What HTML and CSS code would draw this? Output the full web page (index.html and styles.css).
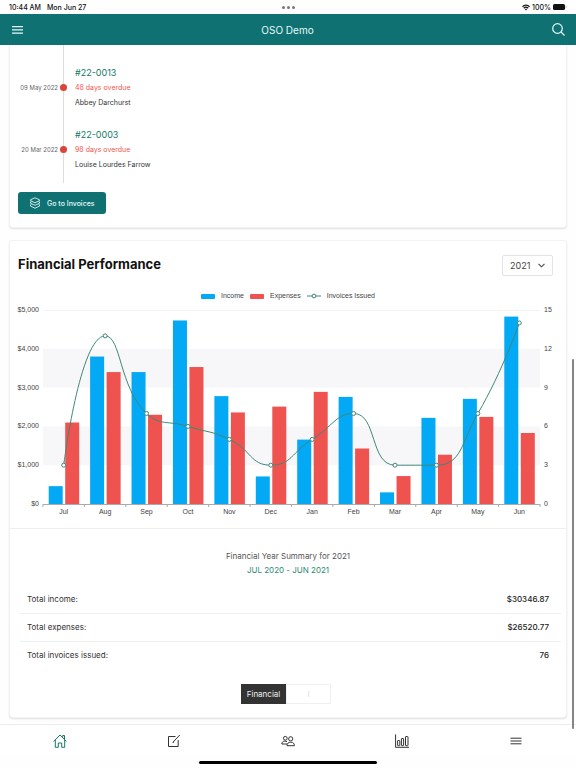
FILE: index.html
```html
<!DOCTYPE html>
<html lang="en">
<head>
    <meta charset="UTF-8">
    <meta name="viewport" content="width=device-width, initial-scale=1.0">
    <title>OSO Demo</title>
    <link rel="stylesheet" href="styles.css">
</head>
<body>
    <div class="status-bar">
        <div class="status-left"><span>10:44 AM</span><span>Mon Jun 27</span></div>
        <div class="status-dots"><i></i><i></i><i></i></div>
        <div class="status-right">
            <svg width="8" height="7" viewBox="0 0 16 13" fill="none" stroke="#111" stroke-width="2.4"><path d="M1 5c4-4.500 10-4.500 14 0M3.600 8c2.600-2.800 6.200-2.800 8.800 0"/><path d="M8 12.500L5.800 10c1.300-1.200 3.100-1.200 4.400 0z" fill="#111" stroke="none"/></svg>
            <span>100%</span>
            <svg width="14" height="6" viewBox="0 0 14 6"><rect width="12" height="6" rx="1.500" fill="#111"/><path d="M12.800 2v2c1-.3 1-1.700 0-2z" fill="#777"/></svg>
        </div>
    </div>

    <header class="header">
        <button class="icon-btn" aria-label="Menu">
            <svg width="11" height="8" viewBox="0 0 11 8" stroke="#e4fbfa" stroke-width="1.200"><path d="M0 .7h11M0 3.900h11M0 7.100h11"/></svg>
        </button>
        <h1>OSO Demo</h1>
        <button class="icon-btn" aria-label="Search">
            <svg width="13" height="13" viewBox="0 0 13 13" fill="none" stroke="#e4fbfa" stroke-width="1.200"><circle cx="5.500" cy="5.500" r="4.800"/><path d="M9 9l3.500 3.500"/></svg>
        </button>
    </header>

    <main class="content">
        <section class="card card-invoices">
            <ul class="timeline">
                <li class="timeline-item">
                    <span class="date">09 May 2022</span>
                    <div class="details">
                        <a href="#">#22-0013</a>
                        <span class="overdue">48 days overdue</span>
                        <span>Abbey Darchurst</span>
                    </div>
                </li>
                <li class="timeline-item">
                    <span class="date">20 Mar 2022</span>
                    <div class="details">
                        <a href="#">#22-0003</a>
                        <span class="overdue">98 days overdue</span>
                        <span>Louise Lourdes Farrow</span>
                    </div>
                </li>
            </ul>
            <button class="btn">
                <svg width="12" height="12" viewBox="0 0 24 24" fill="none" stroke="#d9f5f3" stroke-width="1.800" stroke-linejoin="round"><path d="M12 1.500l9 4v2l-9 4-9-4v-2zM5 8.500l-2 1.500v2.500l9 4 9-4V10l-2-1.500M5 14l-2 1.500V18l9 4.500 9-4.500v-2.500L19 14"/></svg>
                Go to Invoices
            </button>
        </section>

        <section class="card">
            <div class="card-head">
                <h2>Financial Performance</h2>
                <div class="select-wrap">
                    <select aria-label="Financial year">
                        <option>2021</option>
                        <option>2020</option>
                    </select>
                    <svg class="chevron" width="7" height="5" viewBox="0 0 7 5" fill="none" stroke="#444" stroke-width="1.100"><path d="M.5.8l3 3 3-3"/></svg>
                </div>
            </div>

            <div class="legend">
                <span class="legend-item"><i class="swatch income"></i>Income</span>
                <span class="legend-item"><i class="swatch expenses"></i>Expenses</span>
                <span class="legend-item">
                    <svg width="14" height="6" viewBox="0 0 14 6" stroke="#3f8878" fill="#fff"><path d="M0 3h14"/><circle cx="7" cy="3" r="1.900"/></svg>Invoices Issued
                </span>
            </div>
            <svg id="chart" class="chart" viewBox="0 0 556 220" role="img" aria-label="Income, expenses and invoices issued by month"></svg>

            <div class="summary">
                <p class="summary-title">Financial Year Summary for 2021</p>
                <p class="summary-range">JUL 2020 - JUN 2021</p>
                <table>
                    <tr><th scope="row">Total income:</th><td>$30346.87</td></tr>
                    <tr><th scope="row">Total expenses:</th><td>$26520.77</td></tr>
                    <tr><th scope="row">Total invoices issued:</th><td>76</td></tr>
                </table>
                <div class="toggle">
                    <button class="active">Financial</button>
                    <button>I</button>
                </div>
            </div>
        </section>
    </main>

    <nav class="tabs">
        <a href="#" class="active" aria-label="Home">
            <svg width="14" height="14" viewBox="0 0 14 14"><path d="M.6 7.500L7 1l6.400 6.500M2.300 6v7.300h3V9h3.400v4.300h3V6M9.700 3.300V1.500h1.800v3.700"/></svg>
        </a>
        <a href="#" aria-label="Edit">
            <svg width="14" height="14" viewBox="0 0 14 14"><path d="M8.500 2.500H1.500v10h9.700V6M6 8.200L12.800 1M5.700 8.500l1.300-.4"/></svg>
        </a>
        <a href="#" aria-label="Clients">
            <svg width="14" height="14" viewBox="0 0 14 14"><circle cx="4.300" cy="4.300" r="1.900"/><circle cx="9.700" cy="4.800" r="2.100"/><path d="M6 10H.8c0-1.800 1.200-2.900 3-2.900.9 0 1.700.3 2.200.8M6 11.700c0-2.200 1.300-3.500 3.700-3.500s3.700 1.300 3.700 3.500z"/></svg>
        </a>
        <a href="#" aria-label="Reports">
            <svg width="14" height="14" viewBox="0 0 14 14"><path d="M.6.4v12.900H14"/><rect x="2.600" y="6.500" width="2.200" height="5.200" rx=".5"/><rect x="6.400" y="4.500" width="2.200" height="7.200" rx=".5"/><rect x="10.500" y="2.500" width="2.500" height="9.200" rx=".5"/></svg>
        </a>
        <a href="#" aria-label="More">
            <svg width="12" height="14" viewBox="0 0 12 14"><path d="M.5 4.200h11M.5 7h11M.5 9.800h11"/></svg>
        </a>
    </nav>
    <div class="home-indicator"></div>
    <div class="scroll-thumb"></div>

    <script src="chart.js"></script>
</body>
</html>
```
FILE: styles.css
```css
* {
    box-sizing: border-box;
}
body {
    margin: 0;
    height: 100vh;
    display: flex;
    flex-direction: column;
    overflow: hidden;
    background: #fefefe;
    color: #333;
    font-family: Inter, "Liberation Sans", sans-serif;
    font-size: 7px;
}
h1, h2, p, ul {
    margin: 0;
    padding: 0;
}
button, select {
    font-family: inherit;
    cursor: pointer;
}
a {
    text-decoration: none;
}
svg {
    display: block;
}

/* status bar */
.status-bar {
    display: grid;
    grid-template-columns: 1fr auto 1fr;
    align-items: center;
    height: 14px;
    padding: 0 9px;
    color: #111;
    font-weight: 500;
}
.status-left {
    display: flex;
    gap: 6px;
}
.status-dots {
    display: flex;
    gap: 2px;
}
.status-dots i {
    width: 3px;
    height: 3px;
    border-radius: 50%;
    background: #777;
}
.status-right {
    display: flex;
    align-items: center;
    justify-content: flex-end;
    gap: 2px;
}

.header {
    display: flex;
    align-items: center;
    justify-content: space-between;
    height: 31px;
    padding: 0 10px 0 11px;
    background: #107172;
    color: #e4fbfa;
}
.header h1 {
    font-size: 10px;
    font-weight: 400;
}
.icon-btn {
    padding: 0 1px;
    border: none;
    background: none;
}

.content {
    flex: 1;
    min-height: 0;
    overflow: hidden;
    padding: 0 9px;
}
.card {
    margin-bottom: 12px;
    border: 1px solid #f3f2f4;
    border-radius: 4px;
    background: #fff;
    box-shadow: 0 1px 2px rgba(0,0,0,0.12);
}
.card-invoices {
    padding-bottom: 13px;
    border-top: none;
    border-radius: 0 0 4px 4px;
}

/* overdue invoices */
.timeline {
    position: relative;
    display: flex;
    flex-direction: column;
    gap: 21px;
    margin-bottom: 9px;
    padding: 22px 0 13px;
    list-style: none;
}
.timeline::before {
    content: "";
    position: absolute;
    top: 0;
    bottom: 0;
    left: 53px;
    width: 1px;
    background: #ddd;
}
.timeline-item {
    display: grid;
    grid-template-columns: 48px 1fr;
    column-gap: 5px;
    align-items: center;
}
.date {
    color: #666;
    font-size: 6px;
    text-align: right;
    white-space: nowrap;
}
.details {
    position: relative;
    display: flex;
    flex-direction: column;
    gap: 4px;
    padding-left: 12px;
    line-height: 11px;
}
.details::before {
    content: "";
    position: absolute;
    top: 50%;
    left: -3px;
    width: 7px;
    height: 7px;
    margin-top: -4px;
    border-radius: 50%;
    background: #dc4437;
}
.details a {
    color: #137a64;
    font-size: 9px;
}
.overdue {
    color: #ee574f;
}
.btn {
    display: flex;
    align-items: center;
    gap: 6px;
    height: 22px;
    margin-left: 8px;
    padding: 0 11px;
    border: none;
    border-radius: 3px;
    background: #107172;
    color: #e4fbfa;
    font-size: 7px;
    font-weight: 500;
}

/* financial performance */
.card-head {
    display: flex;
    justify-content: space-between;
    align-items: flex-start;
    padding: 14px 13px 0 8px;
}
.card-head h2 {
    color: #111;
    font-size: 13px;
    font-weight: 700;
    line-height: 18px;
}
.select-wrap {
    position: relative;
}
.select-wrap select {
    width: 51px;
    height: 21px;
    padding: 0 7px;
    border: 1px solid #e3e2e5;
    border-radius: 2px;
    background: #fff;
    color: #444;
    font-size: 9px;
    appearance: none;
}
.chevron {
    position: absolute;
    top: 8px;
    right: 8px;
    pointer-events: none;
}
.legend {
    display: flex;
    justify-content: center;
    gap: 6px;
    margin-top: 14px;
    color: #444;
    font-family: "Liberation Sans", sans-serif;
    line-height: 12px;
}
.legend-item {
    display: flex;
    align-items: center;
    gap: 6px;
}
.swatch {
    width: 14px;
    height: 5px;
    border-radius: 1px;
}
.income {
    background: #03a9f4;
    fill: #03a9f4;
}
.expenses {
    background: #ef5350;
    fill: #ef5350;
}
.chart {
    width: 100%;
    height: auto;
}
.chart text {
    fill: #444;
    font-family: "Liberation Sans", sans-serif;
    font-size: 7px;
}
.chart .band {
    fill: #f7f6f8;
}
.chart .grid {
    stroke: #f3f2f4;
}
.chart .axis {
    stroke: #aaa;
}
.chart .line {
    fill: none;
    stroke: #3f8878;
}
.chart .point {
    fill: #fff;
    stroke: #3f8878;
}

.summary {
    margin-top: 6px;
    padding: 20px 5px 13px;
    border-top: 1px solid #efeef0;
    text-align: center;
}
.summary p {
    font-size: 8px;
    line-height: 14px;
}
.summary .summary-title {
    color: #555;
}
.summary .summary-range {
    color: #2c8c74;
}
.summary table {
    width: calc(100% - 5px);
    margin: 8px 0 15px 5px;
    border-collapse: collapse;
    font-size: 8px;
}
.summary th, .summary td {
    height: 28px;
    padding: 0 12px 0 7px;
    text-align: left;
    font-weight: 400;
}
.summary td {
    color: #222;
    font-weight: 500;
    text-align: right;
}
.summary tr + tr {
    border-top: 1px solid #f0eff1;
}
.toggle {
    display: flex;
    justify-content: center;
    padding-right: 4px;
}
.toggle button {
    width: 45px;
    height: 20px;
    padding: 0;
    border: 1px solid #f0eff1;
    background: #fff;
    color: #ddd;
    font-size: 8px;
}
.toggle .active {
    border-color: #333;
    background: #333;
    color: #eee;
}

/* bottom tabs */
.tabs {
    display: flex;
    height: 32px;
    padding: 0 3px;
    border-top: 1px solid #ededf0;
    background: #fff;
}
.tabs a {
    flex: 1;
    display: flex;
    align-items: center;
    justify-content: center;
    color: #333;
}
.tabs .active {
    color: #137a64;
}
.tabs svg {
    fill: none;
    stroke: currentColor;
}
.home-indicator {
    width: 31%;
    height: 3px;
    margin: 5px auto 4px;
    border-radius: 2px;
    background: #000;
}
.scroll-thumb {
    position: absolute;
    top: 359px;
    right: 2px;
    width: 2px;
    height: 370px;
    border-radius: 1px;
    background: #858585;
}
```
FILE: chart.js
```js
const months = ['Jul', 'Aug', 'Sep', 'Oct', 'Nov', 'Dec', 'Jan', 'Feb', 'Mar', 'Apr', 'May', 'Jun'];
const income = [460, 3800, 3400, 4730, 2780, 710, 1660, 2760, 300, 2220, 2710, 4830];
const expenses = [2100, 3400, 2300, 3530, 2360, 2510, 2890, 1430, 720, 1270, 2245, 1830];
const issued = [3, 13, 7, 6, 5, 3, 5, 7, 3, 3, 7, 14];

const left = 33, right = 530, top_ = 8, bottom = 202;
const band = (right - left) / months.length;
const y = (value, max) => bottom - value / max * (bottom - top_);

// keep a control point inside the box of its segment
function clamp(c, a, b) {
    return c.map((v, k) => Math.max(Math.min(a[k], b[k]), Math.min(Math.max(a[k], b[k]), v)));
}

function smoothPath(pts) {
    let d = `M${pts[0]}`;
    let out = pts[0];
    for (let i = 1; i < pts.length; i++) {
        const p = pts[i], prev = pts[i - 1], next = pts[i + 1];
        let inn = p, nextOut = p;
        if (next) {
            const lp = Math.hypot(p[0] - prev[0], p[1] - prev[1]);
            const ln = Math.hypot(p[0] - next[0], p[1] - next[1]);
            const f = 0.5 * ln / (ln + lp);
            nextOut = clamp(p.map((v, k) => v + (next[k] - prev[k]) * f), p, next);
            inn = clamp(p.map((v, k) => v - (nextOut[k] - v) * lp / ln), p, prev);
            nextOut = p.map((v, k) => v + (v - inn[k]) * ln / lp);
        }
        d += `C${out} ${inn} ${p}`;
        out = nextOut;
    }
    return d;
}

let svg = '';
[[3, 4], [1, 2]].forEach(([lo, hi]) => {
    svg += `<rect class="band" x="${left}" y="${y(hi, 5)}" width="${right - left}" height="${y(lo, 5) - y(hi, 5)}"/>`;
});
svg += `<path class="grid" d="M${left} ${top_ + 0.5}H${right}"/>`;

for (let i = 0; i <= 5; i++) {
    const label = i ? `$${i},000` : '$0';
    svg += `<text x="29" y="${y(i, 5) + 2}" text-anchor="end">${label}</text>`;
    svg += `<text x="534" y="${y(i, 5) + 2}">${i * 3}</text>`;
}

months.forEach((month, i) => {
    const x = left + band * (i + 0.5);
    svg += `<rect class="income" x="${x - 15}" y="${y(income[i], 5000)}" width="14" height="${bottom - y(income[i], 5000)}"/>`;
    svg += `<rect class="expenses" x="${x + 1.5}" y="${y(expenses[i], 5000)}" width="14" height="${bottom - y(expenses[i], 5000)}"/>`;
    svg += `<text x="${x}" y="212" text-anchor="middle">${month}</text>`;
});

svg += `<path class="axis" d="M${left} ${bottom + 0.5}H${right}"/>`;
for (let i = 0; i <= months.length; i++) {
    svg += `<path class="axis" d="M${left + band * i} ${bottom}v3"/>`;
}

const points = issued.map((n, i) => [left + band * (i + 0.5), y(n, 15)]);
svg += `<path class="line" d="${smoothPath(points)}"/>`;
points.forEach(([px, py]) => {
    svg += `<circle class="point" cx="${px}" cy="${py}" r="2"/>`;
});

document.getElementById('chart').innerHTML = svg;
```
